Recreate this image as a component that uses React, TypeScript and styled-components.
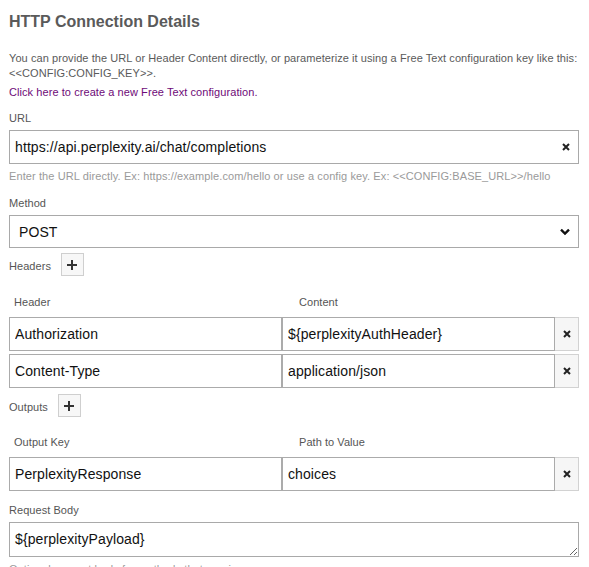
import React from "react";
import styled, { createGlobalStyle } from "styled-components";

const Global = createGlobalStyle`
  html, body { margin: 0; padding: 0; background: #fff; }
  body { font-family: "Liberation Sans", Arial, sans-serif; }
  * { box-sizing: border-box; }
`;

const Page = styled.div`
  padding: 9px 10px 0 9px;
  width: 589px;
`;

const Title = styled.h2`
  margin: 0 0 16px 0;
  font-size: 16px;
  line-height: 26px;
  font-weight: bold;
  color: #5a5a5a;
`;

const Intro = styled.p`
  margin: 0;
  font-size: 11px;
  line-height: 15px;
  letter-spacing: 0.07px;
  color: #5a5a5a;
`;

const LinkLine = styled.a`
  display: block;
  margin: 4px 0 0 0;
  font-size: 11px;
  line-height: 15px;
  letter-spacing: 0.07px;
  color: #6e0a78;
  text-decoration: none;
`;

const Group = styled.div<{ $mt?: number }>`
  margin-top: ${(p) => p.$mt ?? 13}px;
`;

const Label = styled.div`
  font-size: 11px;
  line-height: 14px;
  letter-spacing: 0.05px;
  color: #555;
  margin-bottom: 5px;
`;

const Help = styled.div`
  margin-top: 5px;
  font-size: 11px;
  line-height: 14px;
  letter-spacing: 0.1px;
  color: #9a9a9a;
  white-space: nowrap;
`;

const Wrap = styled.div`
  position: relative;
`;

const TextInput = styled.input`
  display: block;
  width: 100%;
  height: 34px;
  border: 1px solid #a9a9a9;
  border-radius: 0;
  padding: 0 28px 0 5px;
  font-family: "Liberation Sans", Arial, sans-serif;
  font-size: 14px;
  letter-spacing: 0.1px;
  color: #111;
  background: #fff;
  outline: none;
`;

const Select = styled.select`
  display: block;
  width: 100%;
  height: 33px;
  border: 1px solid #a9a9a9;
  border-radius: 0;
  padding: 0 28px 0 9px;
  font-family: "Liberation Sans", Arial, sans-serif;
  font-size: 14px;
  letter-spacing: 0.1px;
  color: #111;
  background: #fff;
  appearance: none;
  outline: none;
`;

const OverlayIcon = styled.span`
  position: absolute;
  right: 9px;
  top: 50%;
  transform: translateY(-50%);
  display: flex;
  align-items: center;
  pointer-events: none;
`;

const InlineRow = styled.div`
  display: flex;
  align-items: center;
  gap: 10px;
`;

const InlineLabel = styled.span`
  font-size: 11px;
  line-height: 14px;
  letter-spacing: 0.05px;
  color: #555;
  padding-top: 3px;
`;

const AddButton = styled.button`
  width: 23px;
  height: 23px;
  padding: 0;
  border: 1px solid #cfcfcf;
  background: #f7f7f7;
  display: flex;
  align-items: center;
  justify-content: center;
`;

const ColHeads = styled.div`
  display: grid;
  grid-template-columns: 273px 1fr;
  font-size: 11px;
  line-height: 14px;
  letter-spacing: 0.05px;
  color: #555;
  margin-bottom: 8px;
`;

const ColHead = styled.div<{ $pl: number }>`
  padding-left: ${(p) => p.$pl}px;
`;

const Rows = styled.div`
  display: flex;
  flex-direction: column;
  gap: 3px;
`;

const KVRow = styled.div`
  display: grid;
  grid-template-columns: 273px 273px 24px;
  height: 34px;
`;

const CellInput = styled(TextInput)`
  height: 34px;
  padding-right: 5px;
  border-color: #ababab;
`;

const RemoveButton = styled.button`
  height: 34px;
  padding: 0;
  border: 1px solid #d2d2d2;
  border-left: none;
  background: #f6f6f6;
  display: flex;
  align-items: center;
  justify-content: center;
`;

const TextArea = styled.textarea`
  display: block;
  width: 100%;
  height: 35px;
  border: 1px solid #a9a9a9;
  border-radius: 0;
  padding: 7px 5px;
  font-family: "Liberation Sans", Arial, sans-serif;
  font-size: 14px;
  letter-spacing: 0.1px;
  line-height: 18px;
  color: #111;
  resize: vertical;
  outline: none;
`;

const XIcon = () => (
  <svg width="8" height="8" viewBox="0 0 8 8">
    <path d="M1 1 L7 7 M7 1 L1 7" stroke="#222" strokeWidth="2" strokeLinecap="butt" />
  </svg>
);

const PlusIcon = () => (
  <svg width="10" height="10" viewBox="0 0 10 10">
    <path d="M5 0 V10 M0 5 H10" stroke="#333" strokeWidth="2" />
  </svg>
);

const Chevron = () => (
  <svg width="10" height="7" viewBox="0 0 10 7">
    <path d="M1 1.2 L5 5 L9 1.2" stroke="#111" strokeWidth="2.4" fill="none" />
  </svg>
);

type KV = { k: string; v: string };

const KVTable = ({ heads, rows }: { heads: [string, string]; rows: KV[] }) => (
  <>
    <ColHeads>
      <ColHead $pl={5}>{heads[0]}</ColHead>
      <ColHead $pl={17}>{heads[1]}</ColHead>
    </ColHeads>
    <Rows>
      {rows.map((r) => (
        <KVRow key={r.k}>
          <CellInput defaultValue={r.k} />
          <CellInput defaultValue={r.v} />
          <RemoveButton aria-label="Remove">
            <XIcon />
          </RemoveButton>
        </KVRow>
      ))}
    </Rows>
  </>
);

export default function App() {
  return (
    <Page>
      <Global />
      <Title>HTTP Connection Details</Title>
      <Intro>
        You can provide the URL or Header Content directly, or parameterize it using a Free Text configuration key like this:
        <br />
        &lt;&lt;CONFIG:CONFIG_KEY&gt;&gt;.
      </Intro>
      <LinkLine href="#">Click here to create a new Free Text configuration.</LinkLine>

      <Group $mt={11}>
        <Label>URL</Label>
        <Wrap>
          <TextInput defaultValue="https://api.perplexity.ai/chat/completions" />
          <OverlayIcon>
            <XIcon />
          </OverlayIcon>
        </Wrap>
        <Help>Enter the URL directly. Ex: https://example.com/hello or use a config key. Ex: &lt;&lt;CONFIG:BASE_URL&gt;&gt;/hello</Help>
      </Group>

      <Group $mt={13}>
        <Label>Method</Label>
        <Wrap>
          <Select defaultValue="POST">
            <option>GET</option>
            <option>POST</option>
            <option>PUT</option>
            <option>DELETE</option>
          </Select>
          <OverlayIcon>
            <Chevron />
          </OverlayIcon>
        </Wrap>
      </Group>

      <Group $mt={5}>
        <InlineRow>
          <InlineLabel>Headers</InlineLabel>
          <AddButton aria-label="Add header">
            <PlusIcon />
          </AddButton>
        </InlineRow>
      </Group>

      <Group $mt={19}>
        <KVTable
          heads={["Header", "Content"]}
          rows={[
            { k: "Authorization", v: "${perplexityAuthHeader}" },
            { k: "Content-Type", v: "application/json" },
          ]}
        />
      </Group>

      <Group $mt={6}>
        <InlineRow>
          <InlineLabel>Outputs</InlineLabel>
          <AddButton aria-label="Add output">
            <PlusIcon />
          </AddButton>
        </InlineRow>
      </Group>

      <Group $mt={18}>
        <KVTable heads={["Output Key", "Path to Value"]} rows={[{ k: "PerplexityResponse", v: "choices" }]} />
      </Group>

      <Group $mt={12}>
        <Label>Request Body</Label>
        <TextArea defaultValue="${perplexityPayload}" />
        <Help>Optional request body for methods that require one.</Help>
      </Group>
    </Page>
  );
}
